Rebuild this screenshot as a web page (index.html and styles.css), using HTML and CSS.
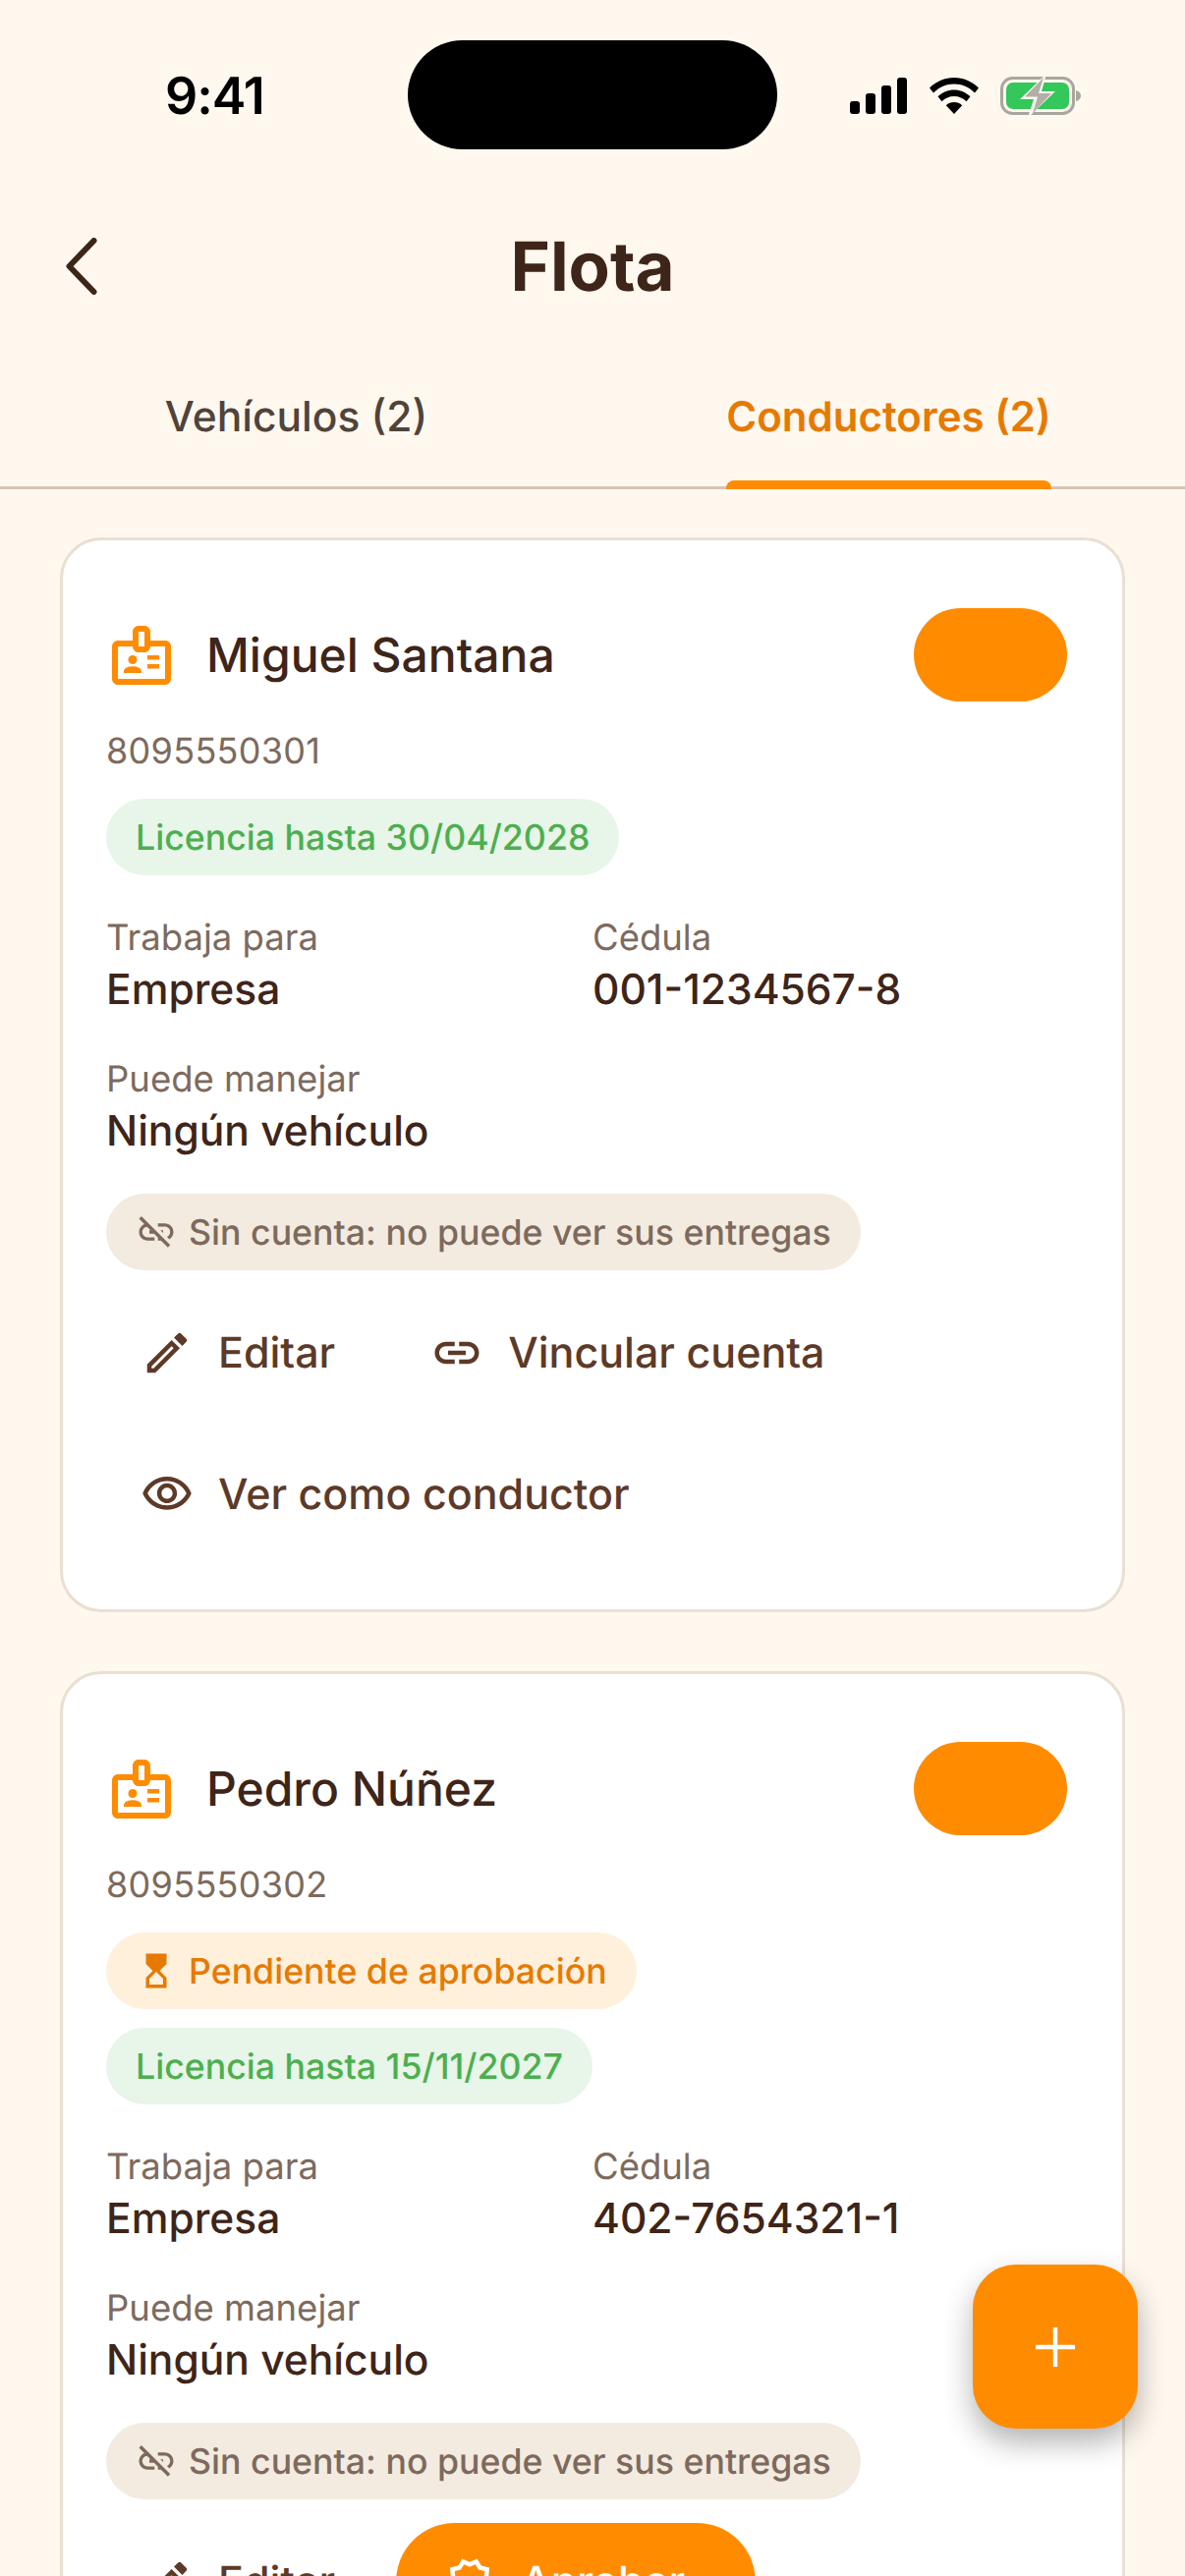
FILE: index.html
```html
<!DOCTYPE html>
<html>
  <head>
    <meta charset="UTF-8" />
    <title>Flota</title>
    <link rel="stylesheet" href="styles.css">
  </head>
  <body>
    <svg class="icon-defs" width="0" height="0" aria-hidden="true">
      <symbol id="i-badge" viewBox="0 0 24 24">
        <path fill-rule="evenodd" d="M20 7h-5V4c0-1.1-.9-2-2-2h-2c-1.1 0-2 .9-2 2v3H4c-1.1 0-2 .9-2 2v11c0 1.1.9 2 2 2h16c1.1 0 2-.9 2-2V9c0-1.1-.9-2-2-2zM11 4h2v5h-2V4zm9 16H4V9h5c0 1.1.9 2 2 2h2c1.1 0 2-.9 2-2h5v11z"/>
        <circle cx="9" cy="13.5" r="1.5"/>
        <path d="M11.08 16.18C10.44 15.9 9.74 15.75 9 15.75s-1.44.15-2.08.43C6.36 16.42 6 16.96 6 17.57V18h6v-.43c0-.61-.36-1.15-.92-1.39zM14 12h4v1.5h-4zM14 15h4v1.5h-4z"/>
      </symbol>
      <symbol id="i-link-off" viewBox="0 0 24 24">
        <path d="M14.39 11 16 12.61V11zM17 7h-4v1.9h4c1.71 0 3.1 1.39 3.1 3.1 0 1.27-.77 2.37-1.87 2.84l1.4 1.4C21.05 15.36 22 13.79 22 12c0-2.76-2.24-5-5-5zM2 4.27l3.11 3.11C3.29 8.12 2 9.91 2 12c0 2.76 2.24 5 5 5h4v-1.9H7c-1.71 0-3.1-1.39-3.1-3.1 0-1.59 1.21-2.9 2.76-3.07L8.73 11H8v2h2.73L13 15.27V17h1.73l4.01 4.01 1.41-1.41L3.41 2.86 2 4.27z"/>
      </symbol>
      <symbol id="i-edit" viewBox="0 0 24 24">
        <path d="M3 17.25V21h3.75L17.81 9.94l-3.75-3.75L3 17.25zM5.92 19H5v-.92l9.06-9.06.92.92L5.92 19zM20.71 7.04c.39-.39.39-1.02 0-1.41l-2.34-2.34c-.39-.39-1.02-.39-1.41 0l-1.83 1.83 3.75 3.75 1.83-1.83z"/>
      </symbol>
      <symbol id="i-link" viewBox="0 0 24 24">
        <path d="M17 7h-4v2h4c1.65 0 3 1.35 3 3s-1.35 3-3 3h-4v2h4c2.76 0 5-2.24 5-5s-2.24-5-5-5zm-6 8H7c-1.65 0-3-1.35-3-3s1.35-3 3-3h4V7H7c-2.76 0-5 2.24-5 5s2.24 5 5 5h4v-2zm-3-4h8v2H8z"/>
      </symbol>
      <symbol id="i-eye" viewBox="0 0 24 24">
        <path d="M12 6c3.79 0 7.17 2.13 8.82 5.5C19.17 14.87 15.79 17 12 17s-7.17-2.13-8.82-5.5C4.83 8.13 8.21 6 12 6m0-2C7 4 2.73 7.11 1 11.5 2.73 15.89 7 19 12 19s9.27-3.11 11-7.5C21.27 7.11 17 4 12 4zm0 5c1.38 0 2.5 1.12 2.5 2.5S13.38 14 12 14s-2.5-1.12-2.5-2.5S10.62 9 12 9m0-2c-2.48 0-4.5 2.02-4.5 4.5S9.52 16 12 16s4.5-2.02 4.5-4.5S14.48 7 12 7z"/>
      </symbol>
      <symbol id="i-hourglass" viewBox="0 0 24 24">
        <path d="M6 2v6h.01L6 8.01 10 12l-4 4 .01.01H6V22h12v-5.99h-.01L18 16l-4-4 4-3.99-.01-.01H18V2H6zm10 14.5V20H8v-3.5l4-4 4 4z"/>
      </symbol>
      <symbol id="i-verified" viewBox="0 0 24 24">
        <path d="m23 12-2.44-2.78.34-3.68-3.61-.82-1.89-3.18L12 3 8.6 1.54 6.71 4.72l-3.61.81.34 3.68L1 12l2.44 2.78-.34 3.69 3.61.82 1.89 3.18L12 21l3.4 1.46 1.89-3.18 3.61-.82-.34-3.68L23 12zm-4.51 2.11.26 2.79-2.74.62-1.43 2.41L12 18.82l-2.58 1.11-1.43-2.41-2.74-.62.26-2.8L3.66 12l1.85-2.12-.26-2.78 2.74-.61 1.43-2.41L12 5.18l2.58-1.11 1.43 2.41 2.74.62-.26 2.79L20.34 12l-1.85 2.11z"/>
      </symbol>
    </svg>

    <div class="screen">
      <!-- Status bar -->
      <div class="status-bar">
        <span class="status-time">9:41</span>
        <div class="island"></div>
        <div class="status-icons">
          <svg class="status-signal" viewBox="0 0 58 37">
            <rect x="0" y="24" width="10" height="13" rx="3"/>
            <rect x="16" y="16" width="10" height="21" rx="3"/>
            <rect x="32" y="8" width="10" height="29" rx="3"/>
            <rect x="48" y="0" width="10" height="37" rx="3"/>
          </svg>
          <svg class="status-wifi" viewBox="0 0 50 37">
            <path d="M25 0C15.500 0 7 3.700 0 10.500l4 5C10 9.600 17 6.500 25 6.500s15 3.100 21 9l4-5C43 3.700 34.500 0 25 0z"/>
            <path d="M25 12.500c-6.300 0-12 2.500-16.500 6.800l4 5c3.300-3.200 7.500-5.200 12.500-5.200s9.200 2 12.500 5.200l4-5C37 15 31.300 12.500 25 12.500z"/>
            <path d="M25 25c-3.200 0-6 1.200-8.200 3.200L25 37l8.200-8.800C31 26.200 28.200 25 25 25z"/>
          </svg>
          <svg class="status-battery" viewBox="0 0 82 39">
            <rect x="1.500" y="1.500" width="73" height="36" rx="11" fill="none" stroke="#a9a6a0" stroke-width="3"/>
            <rect x="6" y="6" width="64" height="27" rx="7" fill="#34c759"/>
            <path d="M77 14c3 .8 5 2.800 5 5.500S80 24.200 77 25z" fill="#a9a6a0"/>
            <path d="M47 -3 20 23h14l-6 19 28-27H42z" fill="#fff8ef"/>
            <path d="M44 1 25 20.500h13l-5 17L52 17H39z" fill="#b2aea8"/>
          </svg>
        </div>
      </div>

      <!-- Header -->
      <div class="app-header">
        <svg class="back-icon" viewBox="0 0 32 58">
          <path d="M28.500 3 3.500 29l25 26" fill="none" stroke="currentColor" stroke-width="6" stroke-linecap="round" stroke-linejoin="round"/>
        </svg>
        <h1>Flota</h1>
        <span></span>
      </div>

      <!-- Tabs -->
      <div class="tabs">
        <div class="tab"><span class="tab-label">Vehículos (2)</span></div>
        <div class="tab active"><span class="tab-label">Conductores (2)</span></div>
      </div>

      <div class="card-list">
        <div class="card">
          <div class="card-head">
            <svg class="badge-icon"><use href="#i-badge"/></svg>
            <span class="driver-name">Miguel Santana</span>
            <span class="status-pill"></span>
          </div>
          <div class="phone">8095550301</div>
          <div class="chips">
            <span class="chip chip-green">Licencia hasta 30/04/2028</span>
          </div>
          <div class="fields">
            <div class="field">
              <span class="field-label">Trabaja para</span>
              <span class="field-value">Empresa</span>
            </div>
            <div class="field">
              <span class="field-label">Cédula</span>
              <span class="field-value">001-1234567-8</span>
            </div>
            <div class="field field-wide">
              <span class="field-label">Puede manejar</span>
              <span class="field-value">Ningún vehículo</span>
            </div>
          </div>
          <span class="chip chip-grey"><svg class="chip-icon"><use href="#i-link-off"/></svg>Sin cuenta: no puede ver sus entregas</span>
          <div class="actions">
            <div class="action"><svg class="action-icon"><use href="#i-edit"/></svg>Editar</div>
            <div class="action"><svg class="action-icon"><use href="#i-link"/></svg>Vincular cuenta</div>
            <div class="action"><svg class="action-icon"><use href="#i-eye"/></svg>Ver como conductor</div>
          </div>
        </div>

        <div class="card">
          <div class="card-head">
            <svg class="badge-icon"><use href="#i-badge"/></svg>
            <span class="driver-name">Pedro Núñez</span>
            <span class="status-pill"></span>
          </div>
          <div class="phone">8095550302</div>
          <div class="chips">
            <span class="chip chip-orange"><svg class="chip-icon"><use href="#i-hourglass"/></svg>Pendiente de aprobación</span>
            <span class="chip chip-green">Licencia hasta 15/11/2027</span>
          </div>
          <div class="fields">
            <div class="field">
              <span class="field-label">Trabaja para</span>
              <span class="field-value">Empresa</span>
            </div>
            <div class="field">
              <span class="field-label">Cédula</span>
              <span class="field-value">402-7654321-1</span>
            </div>
            <div class="field field-wide">
              <span class="field-label">Puede manejar</span>
              <span class="field-value">Ningún vehículo</span>
            </div>
          </div>
          <span class="chip chip-grey"><svg class="chip-icon"><use href="#i-link-off"/></svg>Sin cuenta: no puede ver sus entregas</span>
          <div class="actions">
            <div class="action"><svg class="action-icon"><use href="#i-edit"/></svg>Editar</div>
            <div class="action action-primary"><svg class="action-icon"><use href="#i-verified"/></svg>Aprobar</div>
          </div>
        </div>
      </div>

      <div class="fab">
        <svg viewBox="0 0 44 44"><path d="M22 2v40M2 22h40" fill="none" stroke="#fff" stroke-width="4.500"/></svg>
      </div>
    </div>
  </body>
</html>
```

FILE: styles.css
```css
/* Page reset */
html, body {
  margin: 0;
  padding: 0;
  background: #fff8ef;
  font-family: 'Inter', 'Noto Sans', sans-serif;
  color: #3e2519;
  text-rendering: geometricPrecision;
}

.icon-defs {
  position: absolute;
}

.screen {
  position: relative;
  width: 1206px;
  height: 2622px;
  overflow: hidden;
}

/* Status bar */
.status-bar {
  position: relative;
  height: 197px;
}

.status-time {
  position: absolute;
  left: 168px;
  top: 67px;
  font-size: 52px;
  line-height: 62px;
  font-weight: 600;
  letter-spacing: -1px;
  color: #000;
}

.island {
  position: absolute;
  left: 415px;
  top: 41px;
  width: 376px;
  height: 111px;
  border-radius: 56px;
  background: #000;
}

.status-icons {
  position: absolute;
  left: 865px;
  top: 78px;
  display: flex;
  align-items: center;
  gap: 22px;
}

.status-signal {
  width: 58px;
  height: 37px;
  margin-right: 1px;
}

.status-wifi {
  width: 50px;
  height: 37px;
}

.status-battery {
  width: 82px;
  height: 39px;
  overflow: visible;
}

/* Header */
.app-header {
  display: grid;
  grid-template-columns: 1fr auto 1fr;
  align-items: center;
  height: 148px;
  padding: 0 67px;
}

.back-icon {
  width: 32px;
  height: 58px;
  color: #3e2519;
}

.app-header h1 {
  margin: 0;
  font-size: 69px;
  line-height: 80px;
  font-weight: 700;
}

/* Tabs */
.tabs {
  display: flex;
  height: 153px;
  box-sizing: border-box;
  border-bottom: 3px solid #d6c5b8;
}

.tab {
  flex: 1;
  display: flex;
  justify-content: center;
}

.tab-label {
  position: relative;
  height: 150px;
  font-size: 42.5px;
  line-height: 160px;
  font-weight: 500;
  color: #50433a;
}

.tab.active .tab-label {
  font-weight: 600;
  font-size: 42px;
  color: #e67a00;
}

.tab.active .tab-label:after {
  content: "";
  position: absolute;
  left: 0;
  right: 0;
  bottom: -3px;
  height: 9px;
  border-radius: 8px 8px 0 0;
  background: #ff8c00;
}

/* Cards */
.card-list {
  display: flex;
  flex-direction: column;
  gap: 60px;
  padding: 49px 61px 0;
}

.card {
  display: flex;
  flex-direction: column;
  align-items: flex-start;
  padding: 69px 56px 57px 44px;
  border: 3px solid #e9dfd2;
  border-radius: 42px;
  background: #fff;
}

.card-head {
  display: flex;
  align-items: center;
  align-self: stretch;
  height: 95px;
}

.badge-icon {
  width: 72px;
  height: 72px;
  margin-right: 30px;
  fill: #ff8c00;
}

.driver-name {
  flex: 1;
  font-size: 48px;
  font-weight: 550;
}

.status-pill {
  width: 156px;
  height: 95px;
  border-radius: 48px;
  background: #ff8c00;
}

.phone {
  margin-top: 28px;
  font-size: 36px;
  line-height: 44px;
  letter-spacing: 0.3px;
  color: #7d6a5d;
}

.chips {
  display: flex;
  flex-direction: column;
  align-items: flex-start;
  gap: 19px;
  margin-top: 27px;
}

.chip {
  display: inline-flex;
  align-items: center;
  gap: 12px;
  height: 78px;
  padding: 0 30px;
  border-radius: 39px;
  font-size: 35.7px;
  font-weight: 450;
  white-space: nowrap;
}

.chip-icon {
  width: 42px;
  height: 42px;
  fill: currentColor;
}

.chip-green {
  background: #e8f5e9;
  color: #4caf50;
}

.chip-orange {
  background: #fff0dc;
  color: #e67a00;
}

.chip-grey {
  background: #f3ebe0;
  color: #7d6a5d;
}

.fields {
  display: grid;
  grid-template-columns: 495px 1fr;
  row-gap: 39px;
  align-self: stretch;
  margin-top: 40px;
  margin-bottom: 35px;
}

.field {
  display: flex;
  flex-direction: column;
}

.field-wide {
  grid-column: 1 / -1;
}

.field-label {
  font-size: 36.500px;
  line-height: 46px;
  color: #7d6a5d;
}

.field-value {
  margin-top: 3px;
  font-size: 42.500px;
  line-height: 56px;
  font-weight: 550;
}

/* Action buttons */
.actions {
  display: flex;
  flex-wrap: wrap;
  gap: 24px 27px;
  margin-top: 24px;
}

.action {
  display: flex;
  align-items: center;
  gap: 25px;
  height: 120px;
  padding: 0 35px;
  border-radius: 60px;
  font-size: 43px;
  font-weight: 550;
  color: #5d3a28;
}

.action-icon {
  width: 54px;
  height: 54px;
  fill: currentColor;
}

.action-primary {
  padding: 0 72px 0 48px;
  background: #ff8c00;
  color: #fff;
}

/* Floating button */
.fab {
  position: absolute;
  left: 990px;
  top: 2305px;
  display: flex;
  align-items: center;
  justify-content: center;
  width: 168px;
  height: 167px;
  border-radius: 44px;
  background: #ff8c00;
  box-shadow: 0 14px 30px rgba(0, 0, 0, 0.3);
}

.fab svg {
  width: 44px;
  height: 44px;
}
```
